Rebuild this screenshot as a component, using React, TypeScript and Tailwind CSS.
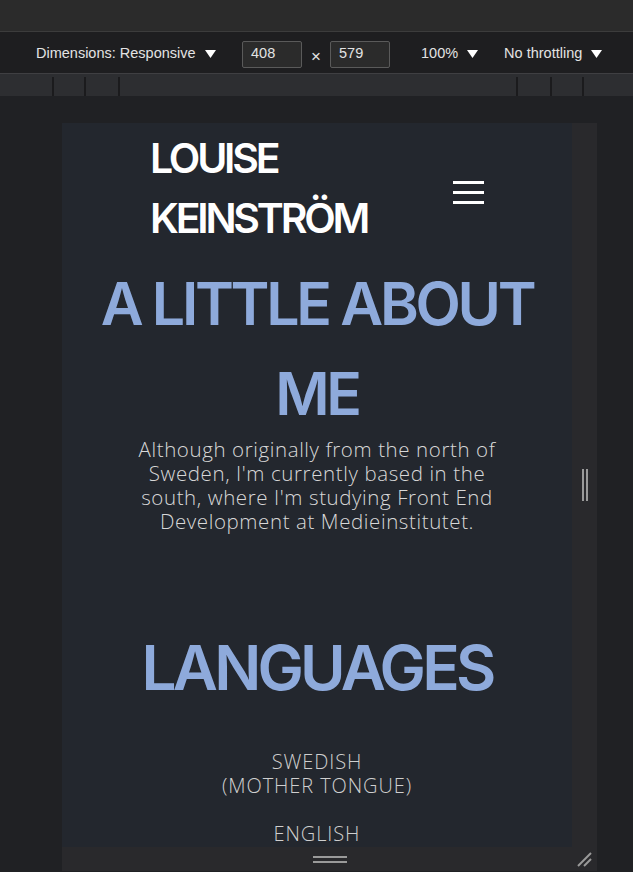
const uiFont = { fontFamily: '"Liberation Sans", Arial, sans-serif' };

const Caret = () => (
  <svg width="11" height="8" viewBox="0 0 11 8" className="ml-[9px]">
    <path d="M0 0 L11 0 L5.5 8 Z" fill="#ffffff" />
  </svg>
);

const Toolbar = () => (
  <div className="h-[41px] bg-[#1e1e20] flex items-center pt-[3px] text-[14.5px] text-[#e3e3e3]" style={uiFont}>
    <div className="ml-[36px] flex items-center w-[206px]">
      <span>Dimensions: Responsive</span>
      <Caret />
    </div>
    <div className="w-[60px] h-[27px] border border-[#5a5a5a] bg-[#2b2b2b] rounded-[2px] flex items-center pl-[8px]">408</div>
    <div className="w-[28px] flex justify-center pt-[5px] text-[17px]">×</div>
    <div className="w-[60px] h-[27px] border border-[#5a5a5a] bg-[#2b2b2b] rounded-[2px] flex items-center pl-[8px]">579</div>
    <div className="ml-[31px] flex items-center">
      <span>100%</span>
      <Caret />
    </div>
    <div className="ml-[26px] flex items-center">
      <span>No throttling</span>
      <Caret />
    </div>
  </div>
);

const Ruler = () => (
  <div className="h-[22px] bg-[#2d2e31] flex items-end">
    <div className="w-[52px]" />
    <div className="w-[2px] h-[19px] bg-[#1b1b1d]" />
    <div className="w-[30px]" />
    <div className="w-[2px] h-[19px] bg-[#1b1b1d]" />
    <div className="w-[32px]" />
    <div className="w-[2px] h-[19px] bg-[#1b1b1d]" />
    <div className="flex-1" />
    <div className="w-[2px] h-[19px] bg-[#1b1b1d]" />
    <div className="w-[32px]" />
    <div className="w-[2px] h-[19px] bg-[#1b1b1d]" />
    <div className="w-[30px]" />
    <div className="w-[2px] h-[19px] bg-[#1b1b1d]" />
    <div className="w-[49px]" />
  </div>
);

const headFont = { fontFamily: 'Inter, "Noto Sans", sans-serif' };
const bodyFont = { fontFamily: '"Open Sans", Lato, sans-serif' };

const Viewport = () => (
  <div className="w-[510px] h-[724px] bg-[#23272e] overflow-hidden flex flex-col items-center">
    <header className="w-full px-[88px] pt-[5px] flex justify-between items-start">
      <div className="text-white text-[41px] font-semibold leading-[60px] tracking-[-3.2px]" style={headFont}>
        LOUISE
        <br />
        KEINSTRÖM
      </div>
      <div className="mt-[53px] flex flex-col gap-[7px]">
        <span className="block w-[31px] h-[3px] bg-white" />
        <span className="block w-[31px] h-[3px] bg-white" />
        <span className="block w-[31px] h-[3px] bg-white" />
      </div>
    </header>
    <h1 className="mt-[11px] text-center text-[#8eaadb] text-[59px] font-semibold leading-[90px] tracking-[-3.3px] w-[470px]" style={headFont}>
      A LITTLE ABOUT ME
    </h1>
    <p className="mt-[-2px] text-center text-[#d8d8d8] text-[20.5px] font-light leading-[24px] tracking-[0.6px] w-[372px]" style={bodyFont}>
      Although originally from the north of Sweden, I'm currently based in the south, where I'm studying Front End Development at Medieinstitutet.
    </p>
    <h2 className="mt-[95px] text-center text-[#8eaadb] text-[62px] font-semibold leading-[80px] tracking-[-3.8px]" style={headFont}>
      LANGUAGES
    </h2>
    <p className="mt-[42px] text-center text-[#cfcfcf] text-[20px] font-light leading-[24px] tracking-[0.9px] uppercase" style={bodyFont}>
      Swedish
      <br />
      (Mother tongue)
      <br />
      <br />
      English
    </p>
  </div>
);

export default function App() {
  return (
    <div className="w-[633px] h-[872px] flex flex-col bg-[#202124] overflow-hidden">
      <div className="h-[31px] bg-[#2b2b2b]" />
      <div className="h-[1px] bg-[#3c3c3c]" />
      <Toolbar />
      <div className="h-[1px] bg-[#3f3f42]" />
      <Ruler />
      <div className="flex-1 pl-[62px] pt-[27px]">
        <div className="flex">
          <Viewport />
          <div className="w-[25px] bg-[#29292c] flex items-center justify-center">
            <div className="flex gap-[2px]">
              <span className="block w-[2px] h-[32px] bg-[#9a9a9a]" />
              <span className="block w-[2px] h-[32px] bg-[#9a9a9a]" />
            </div>
          </div>
        </div>
        <div className="w-[535px] h-[24px] bg-[#29292c] flex items-center relative">
          <div className="flex-1 flex flex-col items-center gap-[3px]">
            <span className="block w-[34px] h-[2px] bg-[#9a9a9a]" />
            <span className="block w-[34px] h-[2px] bg-[#9a9a9a]" />
          </div>
          <svg width="16" height="16" viewBox="0 0 16 16" className="absolute right-[5px] bottom-[4px]">
            <line x1="2" y1="15" x2="15" y2="2" stroke="#9a9a9a" strokeWidth="2" />
            <line x1="8" y1="15" x2="15" y2="8" stroke="#9a9a9a" strokeWidth="2" />
          </svg>
        </div>
      </div>
    </div>
  );
}
